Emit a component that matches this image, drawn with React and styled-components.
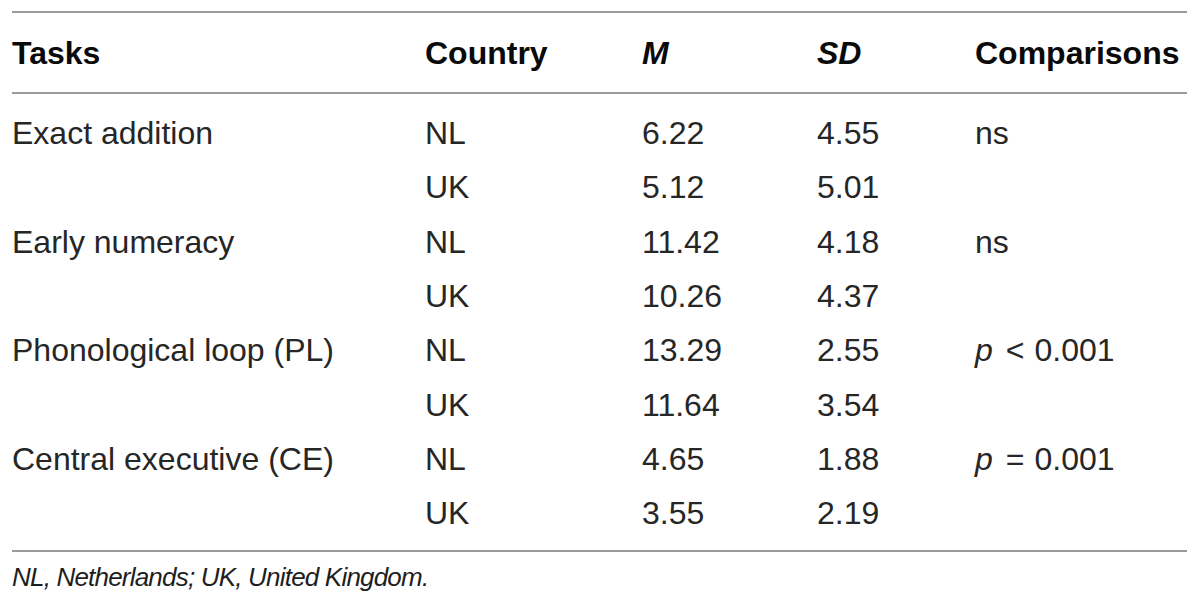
import React from "react";
import styled, { createGlobalStyle } from "styled-components";

const Global = createGlobalStyle`
  html, body { margin: 0; padding: 0; background: #fff; }
  body { font-family: "Liberation Sans", Arial, sans-serif; color: #262626; }
`;

const Page = styled.div`
  padding: 11px 13px 0 12px;
  width: 1175px;
`;

const Table = styled.div`
  border-top: 2px solid #9a9a9a;
  border-bottom: 2px solid #9a9a9a;
`;

const cols = "413px 217px 175px 158px 1fr";

const HeadRow = styled.div`
  display: grid;
  grid-template-columns: ${cols};
  height: 79px;
  align-items: center;
  border-bottom: 2px solid #9a9a9a;
`;

const HeadCell = styled.div`
  font-size: 32px;
  font-weight: 700;
  font-style: ${(p) => (p.$italic ? "italic" : "normal")};
  color: #0a0a0a;
  line-height: 1;
`;

const Body = styled.div`
  padding: 12px 0 10px;
`;

const Row = styled.div`
  display: grid;
  grid-template-columns: ${cols};
  height: 54.3px;
  align-items: center;
`;

const Cell = styled.div`
  font-size: 32px;
  line-height: 1;
  white-space: nowrap;
`;

const Em = styled.i`
  font-style: italic;
`;

const Op = styled.span`
  margin: 0 10px 0 13px;
`;

const Foot = styled.div`
  margin-top: 10px;
  font-size: 26px;
  font-style: italic;
  letter-spacing: -0.8px;
  line-height: 30px;
  color: #1e1e1e;
`;

const rows = [
  ["Exact addition", "NL", "6.22", "4.55", "ns"],
  ["", "UK", "5.12", "5.01", ""],
  ["Early numeracy", "NL", "11.42", "4.18", "ns"],
  ["", "UK", "10.26", "4.37", ""],
  ["Phonological loop (PL)", "NL", "13.29", "2.55", ["<", "0.001"]],
  ["", "UK", "11.64", "3.54", ""],
  ["Central executive (CE)", "NL", "4.65", "1.88", ["=", "0.001"]],
  ["", "UK", "3.55", "2.19", ""],
];

export default function App() {
  return (
    <Page>
      <Global />
      <Table>
        <HeadRow>
          <HeadCell>Tasks</HeadCell>
          <HeadCell>Country</HeadCell>
          <HeadCell $italic>M</HeadCell>
          <HeadCell $italic>SD</HeadCell>
          <HeadCell>Comparisons</HeadCell>
        </HeadRow>
        <Body>
          {rows.map((r, i) => (
            <Row key={i}>
              {r.map((c, j) => (
                <Cell key={j}>
                  {Array.isArray(c) ? (
                    <>
                      <Em>p</Em>
                      <Op>{c[0]}</Op>
                      {c[1]}
                    </>
                  ) : (
                    c
                  )}
                </Cell>
              ))}
            </Row>
          ))}
        </Body>
      </Table>
      <Foot>NL, Netherlands; UK, United Kingdom.</Foot>
    </Page>
  );
}
